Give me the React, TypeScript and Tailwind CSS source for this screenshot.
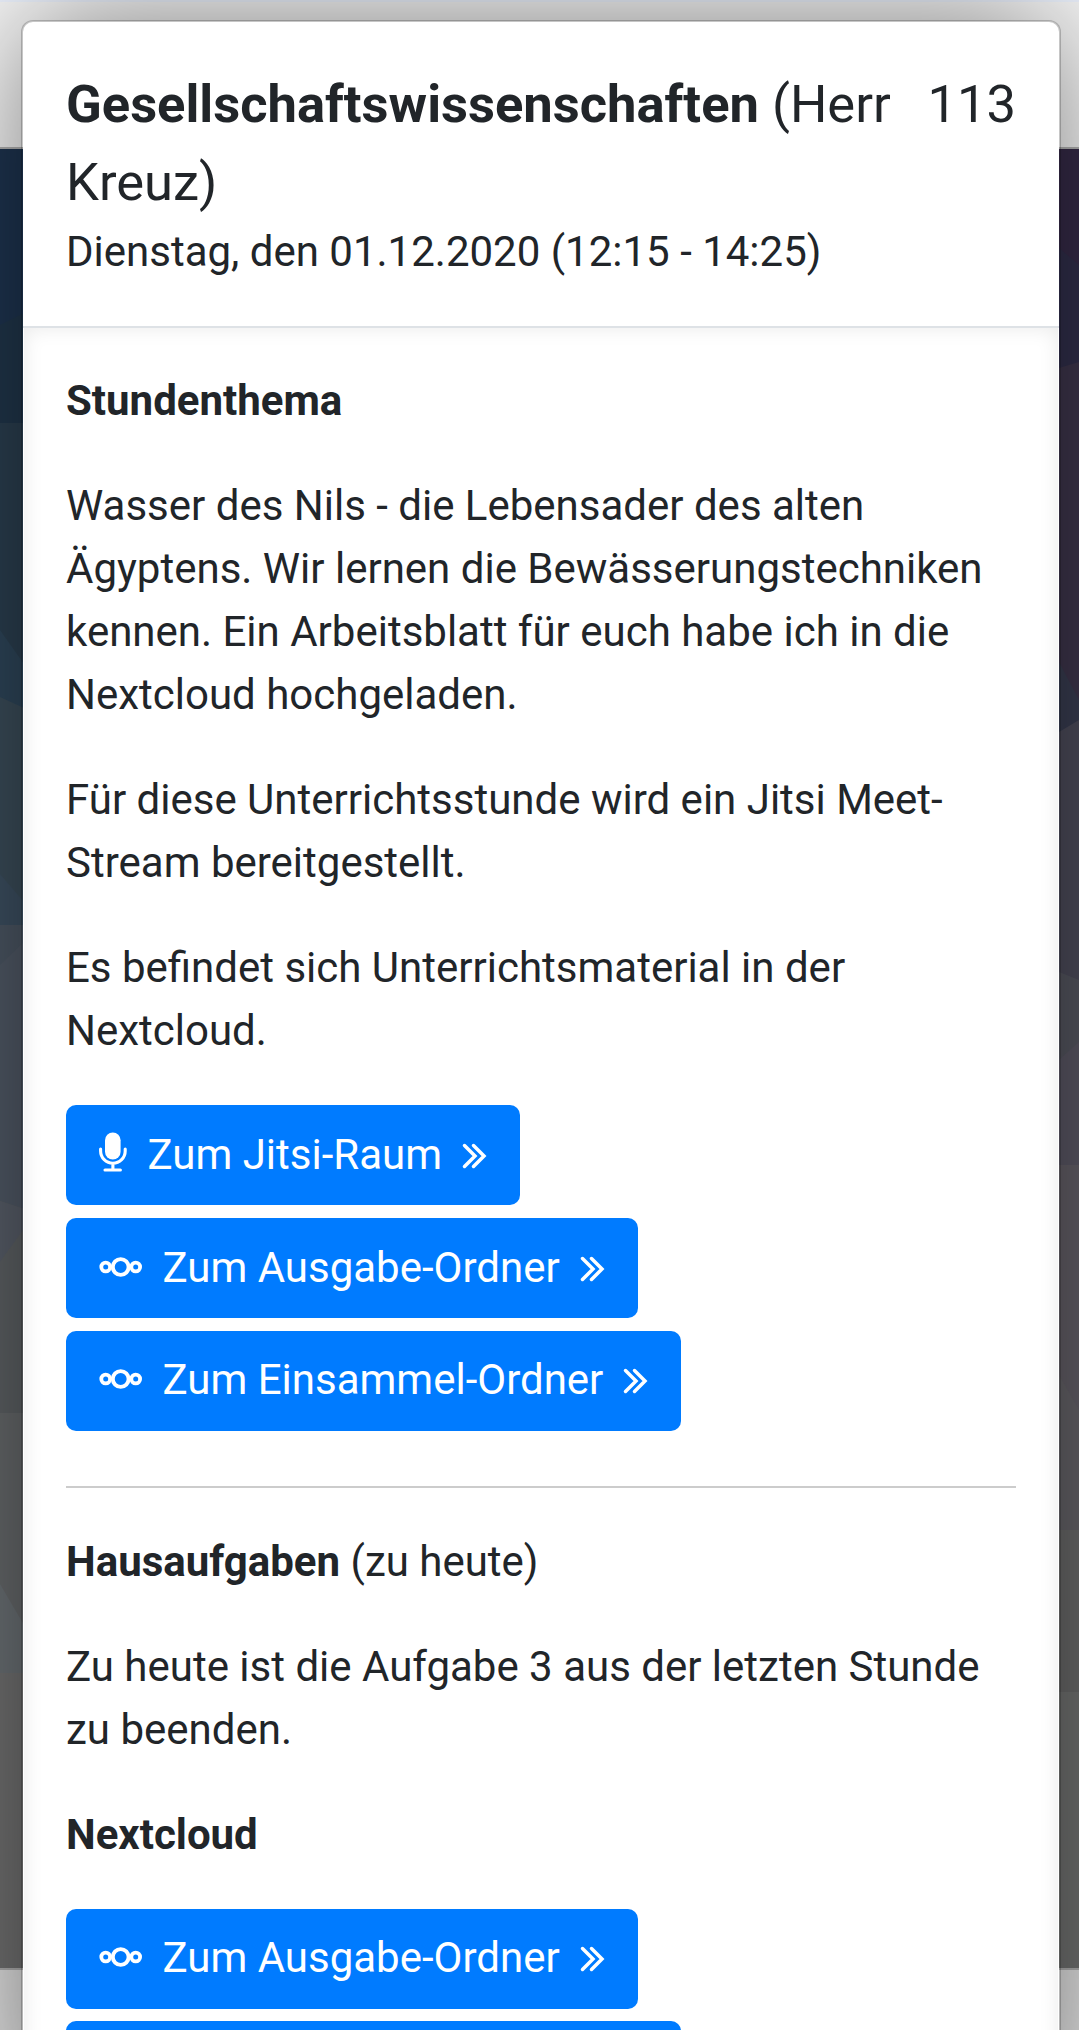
import type { ReactNode } from "react";

/** Polygonal wallpaper that shows at both sides of the dialog. */
function Wallpaper() {
  return (
    <svg className="absolute left-0 top-[149px] h-[1819px] w-full" viewBox="0 149 1079 1819" preserveAspectRatio="none" aria-hidden="true">
      <rect x="0" y="149" width="540" height="1819" fill="#1e3450" />
      <path d="M0 325L24 313V430H0Z" fill="#20364b" />
      <path d="M0 423H540V925H0Z" fill="#2b3f50" />
      <path d="M0 630L24 664V712H0Z" fill="#2e465a" />
      <path d="M0 697L24 708H540V930H0Z" fill="#3b4d5a" />
      <path d="M0 874L24 902V930H0Z" fill="#3d5062" />
      <path d="M0 925H540V1240H0Z" fill="#515a67" />
      <path d="M0 925H24V942L0 965Z" fill="#4c5764" />
      <path d="M0 1201L24 1209H540V1415H0Z" fill="#5e6265" />
      <path d="M0 1201L24 1209V1229L0 1262Z" fill="#595f6a" />
      <path d="M0 1262L24 1229V1413H0Z" fill="#5e6265" />
      <path d="M0 1413H540V1673H0Z" fill="#676a6c" />
      <path d="M0 1584L24 1625V1673H0Z" fill="#6c7276" />
      <path d="M0 1673H540V1968H0Z" fill="#727272" />
      <rect x="540" y="149" width="539" height="1819" fill="#352a47" />
      <path d="M540 248H1059L1079 265V370H540Z" fill="#302e4a" />
      <path d="M540 368H1059L1079 362V740H540Z" fill="#3d354b" />
      <path d="M1059 662L1079 700V722L1059 735Z" fill="#383c50" />
      <path d="M540 732H1059L1079 720V990H540Z" fill="#4c4b5a" />
      <path d="M540 972H1059L1079 980V1070H540Z" fill="#54555f" />
      <path d="M540 1060H1059L1079 1042V1170H540Z" fill="#5a5764" />
      <path d="M540 1165H1079V1540H540Z" fill="#635f67" />
      <path d="M540 1375H1059L1079 1410V1530H540Z" fill="#656368" />
      <path d="M540 1530H1079V1700H540Z" fill="#696969" />
      <path d="M540 1692H1079V1968H540Z" fill="#717271" />
    </svg>
  );
}

function MicIcon() {
  return (
    <svg className="h-[40px] w-[28px] shrink-0" viewBox="0 0 28 40" fill="none" aria-hidden="true">
      <rect x="6" y="0.5" width="15.6" height="27" rx="7.8" fill="white" />
      <path d="M1.6 17V19a12.3 12.3 0 0 0 24.6 0V17M13.9 31.5V37M6 38H21.4" stroke="white" strokeWidth="3.1" strokeLinecap="round" />
    </svg>
  );
}

function NextcloudIcon() {
  return (
    <svg className="h-[20px] w-[43px] shrink-0" viewBox="0 0 43 20" fill="none" stroke="white" aria-hidden="true">
      <circle cx="21.7" cy="10" r="7.9" strokeWidth="3.9" />
      <circle cx="6.7" cy="10" r="4.4" strokeWidth="3.8" />
      <circle cx="36.7" cy="10" r="4.4" strokeWidth="3.8" />
    </svg>
  );
}

function ChevronsIcon() {
  return (
    <svg className="mt-[2px] h-[26px] w-[25px] shrink-0" viewBox="0 0 25 26" fill="none" stroke="white" strokeWidth="3.5" strokeLinecap="round" strokeLinejoin="miter" aria-hidden="true">
      <path d="M2.5 2.5L13 13L2.5 23.5M11.5 2.5L22 13L11.5 23.5" />
    </svg>
  );
}

function ActionButton({ icon, children, raised = false }: { icon: ReactNode; children: ReactNode; raised?: boolean }) {
  return (
    <button
      className={`flex h-[100px] items-center whitespace-nowrap rounded-[10px] bg-[#007bff] pl-[33px] pr-[33px] text-white ${
        raised ? "pb-[3px]" : "pb-px"
      }`}
    >
      {icon}
      <span className="mr-[20px]">{children}</span>
      <ChevronsIcon />
    </button>
  );
}

const mic = (
  <span className="-mt-[5px] mr-[20.5px]">
    <MicIcon />
  </span>
);
const cloud = (
  <span className="-mt-[2px] mr-[20.5px]">
    <NextcloudIcon />
  </span>
);

export default function App() {
  return (
    <div className="relative h-[2030px] w-full overflow-hidden bg-[#e4e4e4] font-['Roboto',sans-serif] text-[42px] leading-[63px] text-[#212529]">
      <div className="absolute inset-x-0 top-0 h-[149px] border-b-2 border-t-2 border-b-[#b4b4b4] border-t-[#eef4ff] bg-[#f8f8f8]" />
      <Wallpaper />
      <div className="absolute inset-x-0 top-[1968px] h-[2px] bg-[#b0b0b0]" />

      <main className="relative ml-[21px] mr-[18px] mt-[20px] h-[2100px] rounded-[12px] border-2 border-black/20 bg-white bg-clip-padding shadow-[0_0_126px_rgba(0,0,0,0.5)]">
        <header className="flex h-[306px] items-start justify-between border-b-2 border-[#dee2e6] px-[43px] pt-[43px]">
          <div>
            <h1 className="-mb-px text-[52.5px] leading-[78px]">
              <b className="font-bold">Gesellschaftswissenschaften</b> (Herr Kreuz)
            </h1>
            <p>Dienstag, den 01.12.2020 (12:15 - 14:25)</p>
          </div>
          <span className="text-[52.5px] leading-[78px]">113</span>
        </header>

        <div className="mx-px h-[1790px] px-[42px] pt-[41px] shadow-[inset_0_0_20px_rgba(0,0,0,0.09)]">
          <section className="flex flex-col gap-[42px]">
            <h2 className="font-bold">Stundenthema</h2>
            <p>
              Wasser des Nils - die Lebensader des alten Ägyptens. Wir lernen die Bewässerungstechniken kennen. Ein
              Arbeitsblatt für euch habe ich in die Nextcloud hochgeladen.
            </p>
            <p>Für diese Unterrichtsstunde wird ein Jitsi Meet-Stream bereitgestellt.</p>
            <p>Es befindet sich Unterrichtsmaterial in der Nextcloud.</p>
            <div className="mt-px flex flex-col items-start gap-[13px]">
              <ActionButton icon={mic}>Zum Jitsi-Raum</ActionButton>
              <ActionButton icon={cloud}>Zum Ausgabe-Ordner</ActionButton>
              <ActionButton icon={cloud} raised>
                Zum Einsammel-Ordner
              </ActionButton>
            </div>
          </section>

          <hr className="mb-[42px] mt-[55px] border-t-2 border-black/20" />

          <section className="flex flex-col gap-[42px]">
            <h2>
              <b className="font-bold">Hausaufgaben</b> (zu heute)
            </h2>
            <p>Zu heute ist die Aufgabe 3 aus der letzten Stunde zu beenden.</p>
            <h2 className="font-bold">Nextcloud</h2>
            <div className="mt-px flex flex-col items-start gap-[12px]">
              <ActionButton icon={cloud} raised>
                Zum Ausgabe-Ordner
              </ActionButton>
              <ActionButton icon={cloud}>Zum Einsammel-Ordner</ActionButton>
            </div>
          </section>
        </div>
      </main>
    </div>
  );
}
